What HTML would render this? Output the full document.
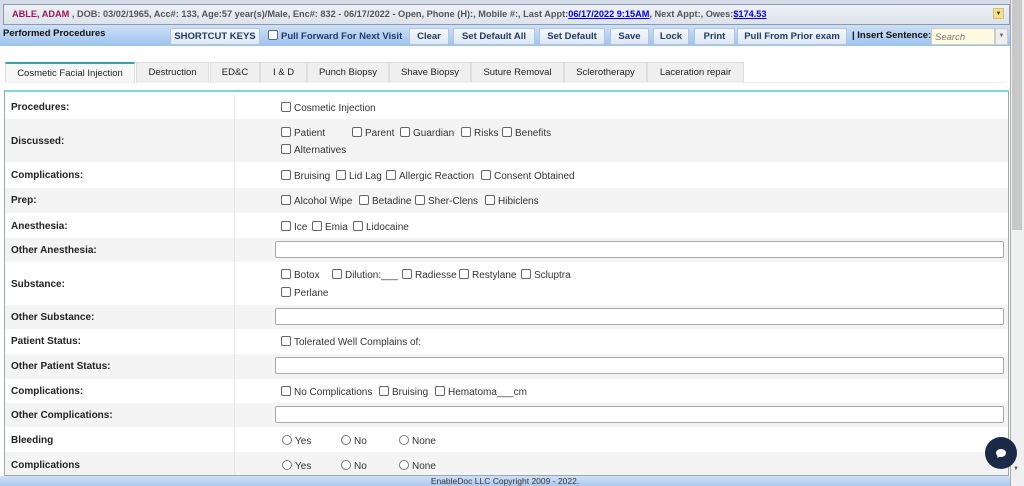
<!DOCTYPE html>
<html><head><meta charset="utf-8"><style>
*{box-sizing:border-box;margin:0;padding:0}
body{width:1024px;height:486px;overflow:hidden;background:#fff;font-family:"Liberation Sans",sans-serif;font-size:10px;color:#333;position:relative}
.a{position:absolute;white-space:nowrap}
#top{position:absolute;left:0;top:0;width:1010px;height:25px;background:#d6dde9}
#hdr{position:absolute;left:3px;top:4px;width:1007px;height:21px;background:linear-gradient(#eef1f6,#dde3ec);border:1px solid #8c9ab0;font-weight:bold;font-size:9.2px;color:#555;padding:4px 8px;white-space:nowrap}
#hdr .n{color:#a0185a}
#hdr a{color:#00e;text-decoration:underline}
#dd{position:absolute;left:993px;top:8px;width:11px;height:11px;background:#f4df8c;border:1px solid #d8c070;font-size:6px;text-align:center;line-height:10px;color:#333}
#tb{position:absolute;left:0;top:25px;width:1010px;height:21px;background:linear-gradient(#cfe0f6,#9cc2ee)}
.btn{position:absolute;top:28px;height:17px;background:linear-gradient(#f5f8fc,#dde6f2);border:1px solid #b4c4da;border-radius:2px;font-weight:bold;font-size:9.5px;color:#1f3b66;text-align:center;line-height:15px}
.cb{display:inline-block;width:10px;height:10px;border:1px solid #666;border-radius:2px;background:#fff;vertical-align:-1px;margin-right:3px}
.rb{display:inline-block;width:10px;height:10px;border:1px solid #777;border-radius:50%;background:#fff;vertical-align:-1px;margin-right:3px}
.tab{position:absolute;top:62px;height:20px;background:#efefef;border:1px solid #ddd;border-bottom:none;text-align:center;line-height:19px;font-size:9.5px;color:#222}
#box{position:absolute;left:4px;top:90px;width:1005px;height:386px;border:1px solid #9aa;border-top:2px solid #7fd4e4;overflow:hidden}
.row{position:absolute;left:0;width:1003px}
.g{background:#f4f4f4}
.lbl{position:absolute;left:6px;font-weight:bold;color:#222;font-size:10px}
.div{position:absolute;left:229px;top:0;bottom:0;border-left:1px solid #e6e6e6}
.inp{position:absolute;left:270px;width:729px;height:17px;border:1px solid #aaa;border-radius:2px;background:#fff}
#foot{position:absolute;left:0;top:476px;width:1010px;height:10px;background:linear-gradient(#cfe0f6,#a9c9ef);text-align:center;font-size:8.5px;line-height:10px;color:#333}
#sb{position:absolute;left:1010px;top:0;width:14px;height:486px;background:#f0f0f0;border-left:1px solid #aaa}
#th{position:absolute;left:1012px;top:0;width:10px;height:230px;background:#c8c8c8}
#chat{position:absolute;left:985px;top:437px;width:32px;height:32px;border-radius:50%;background:#1c2b45}
</style></head><body>
<div id="top"></div>
<div id="hdr"><span class="n">ABLE, ADAM</span> , DOB: 03/02/1965, Acc#: 133, Age:57 year(s)/Male, Enc#: 832 - 06/17/2022 - Open, Phone (H):, Mobile #:, Last Appt:<a>06/17/2022 9:15AM</a>, Next Appt:, Owes:<a>$174.53</a></div>
<div id="dd">▼</div>
<div id="tb"></div>
<div class="a" style="left:3px;top:28px;font-weight:bold;font-size:9.5px;color:#111">Performed Procedures</div>
<div class="btn" style="left:170px;width:90px">SHORTCUT KEYS</div>
<div class="a" style="left:268px;top:30px;font-weight:bold;font-size:9.5px;color:#1f3b66"><span class="cb"></span>Pull Forward For Next Visit</div>
<div class="btn" style="left:409px;width:40px">Clear</div>
<div class="btn" style="left:453px;width:82px">Set Default All</div>
<div class="btn" style="left:539px;width:66px">Set Default</div>
<div class="btn" style="left:610px;width:39px">Save</div>
<div class="btn" style="left:653px;width:36px">Lock</div>
<div class="btn" style="left:694px;width:41px">Print</div>
<div class="btn" style="left:737px;width:110px">Pull From Prior exam</div>
<div class="a" style="left:852px;top:30px;font-weight:bold;font-size:9.5px;color:#111">| Insert Sentence:</div>
<div class="a" style="left:931px;top:28px;width:64px;height:17px;background:#fffbe2;border:1px solid #ccc;font-style:italic;color:#777;padding:3px 3px;font-size:9.5px">Search</div>
<div class="a" style="left:995px;top:28px;width:13px;height:17px;background:#eee;border:1px solid #ccc;font-size:6px;text-align:center;line-height:15px;color:#666">▼</div>

<div class="tab" style="left:5px;width:130px;background:#f7f7f7;border-top:2px solid #2aa5b8">Cosmetic Facial Injection</div>
<div class="tab" style="left:136px;width:73px">Destruction</div>
<div class="tab" style="left:210px;width:50px">ED&amp;C</div>
<div class="tab" style="left:260px;width:47px">I &amp; D</div>
<div class="tab" style="left:307px;width:82px">Punch Biopsy</div>
<div class="tab" style="left:389px;width:82px">Shave Biopsy</div>
<div class="tab" style="left:471px;width:93px">Suture Removal</div>
<div class="tab" style="left:564px;width:83px">Sclerotherapy</div>
<div class="tab" style="left:647px;width:97px">Laceration repair</div>
<div class="a" style="left:5px;top:82px;width:1000px;height:1px;background:#eee"></div>

<div id="box">
<div class="row" style="top:3px;height:24px"><div class="div"></div><div class="lbl" style="top:7px">Procedures:</div><div class="a" style="left:276px;top:7px"><span class="cb"></span>Cosmetic Injection</div></div>
<div class="row g" style="top:27px;height:43px"><div class="div"></div><div class="lbl" style="top:17px">Discussed:</div>
<div class="a" style="left:276px;top:8px"><span class="cb"></span>Patient</div><div class="a" style="left:347px;top:8px"><span class="cb"></span>Parent</div><div class="a" style="left:395px;top:8px"><span class="cb"></span>Guardian</div><div class="a" style="left:456px;top:8px"><span class="cb"></span>Risks</div><div class="a" style="left:497px;top:8px"><span class="cb"></span>Benefits</div><div class="a" style="left:276px;top:25px"><span class="cb"></span>Alternatives</div></div>
<div class="row" style="top:70px;height:26px"><div class="div"></div><div class="lbl" style="top:8px">Complications:</div>
<div class="a" style="left:276px;top:8px"><span class="cb"></span>Bruising</div><div class="a" style="left:331px;top:8px"><span class="cb"></span>Lid Lag</div><div class="a" style="left:381px;top:8px"><span class="cb"></span>Allergic Reaction</div><div class="a" style="left:476px;top:8px"><span class="cb"></span>Consent Obtained</div></div>
<div class="row g" style="top:96px;height:25px"><div class="div"></div><div class="lbl" style="top:7px">Prep:</div>
<div class="a" style="left:276px;top:7px"><span class="cb"></span>Alcohol Wipe</div><div class="a" style="left:354px;top:7px"><span class="cb"></span>Betadine</div><div class="a" style="left:410px;top:7px"><span class="cb"></span>Sher-Clens</div><div class="a" style="left:480px;top:7px"><span class="cb"></span>Hibiclens</div></div>
<div class="row" style="top:121px;height:25px"><div class="div"></div><div class="lbl" style="top:8px">Anesthesia:</div>
<div class="a" style="left:276px;top:8px"><span class="cb"></span>Ice</div><div class="a" style="left:307px;top:8px"><span class="cb"></span>Emia</div><div class="a" style="left:348px;top:8px"><span class="cb"></span>Lidocaine</div></div>
<div class="row g" style="top:146px;height:24px"><div class="div"></div><div class="lbl" style="top:7px">Other Anesthesia:</div><div class="inp" style="top:3px"></div></div>
<div class="row" style="top:170px;height:43px"><div class="div"></div><div class="lbl" style="top:17px">Substance:</div>
<div class="a" style="left:276px;top:7px"><span class="cb"></span>Botox</div><div class="a" style="left:327px;top:7px"><span class="cb"></span>Dilution:___</div><div class="a" style="left:397px;top:7px"><span class="cb"></span>Radiesse</div><div class="a" style="left:454px;top:7px"><span class="cb"></span>Restylane</div><div class="a" style="left:516px;top:7px"><span class="cb"></span>Scluptra</div><div class="a" style="left:276px;top:25px"><span class="cb"></span>Perlane</div></div>
<div class="row g" style="top:213px;height:24px"><div class="div"></div><div class="lbl" style="top:7px">Other Substance:</div><div class="inp" style="top:3px"></div></div>
<div class="row" style="top:237px;height:25px"><div class="div"></div><div class="lbl" style="top:7px">Patient Status:</div><div class="a" style="left:276px;top:7px"><span class="cb"></span>Tolerated Well Complains of:</div></div>
<div class="row g" style="top:262px;height:25px"><div class="div"></div><div class="lbl" style="top:7px">Other Patient Status:</div><div class="inp" style="top:3px"></div></div>
<div class="row" style="top:287px;height:24px"><div class="div"></div><div class="lbl" style="top:7px">Complications:</div>
<div class="a" style="left:276px;top:7px"><span class="cb"></span>No Complications</div><div class="a" style="left:374px;top:7px"><span class="cb"></span>Bruising</div><div class="a" style="left:430px;top:7px"><span class="cb"></span>Hematoma___cm</div></div>
<div class="row g" style="top:311px;height:24px"><div class="div"></div><div class="lbl" style="top:7px">Other Complications:</div><div class="inp" style="top:3px"></div></div>
<div class="row" style="top:335px;height:25px"><div class="div"></div><div class="lbl" style="top:8px">Bleeding</div>
<div class="a" style="left:277px;top:8px"><span class="rb"></span>Yes</div><div class="a" style="left:336px;top:8px"><span class="rb"></span>No</div><div class="a" style="left:394px;top:8px"><span class="rb"></span>None</div></div>
<div class="row g" style="top:360px;height:26px"><div class="div"></div><div class="lbl" style="top:8px">Complications</div>
<div class="a" style="left:277px;top:8px"><span class="rb"></span>Yes</div><div class="a" style="left:336px;top:8px"><span class="rb"></span>No</div><div class="a" style="left:394px;top:8px"><span class="rb"></span>None</div></div>
</div>
<div id="foot">EnableDoc LLC Copyright 2009 - 2022.</div>
<div id="sb"></div><div id="th"></div>
<div class="a" style="left:1013px;top:466px;font-size:6px;color:#555">▼</div>
<div id="chat"><svg width="32" height="32" viewBox="0 0 32 32"><ellipse cx="16" cy="16" rx="5" ry="4" fill="#fff"/><path d="M13 18 L12 21 L16 19Z" fill="#fff"/></svg></div>
</body></html>
